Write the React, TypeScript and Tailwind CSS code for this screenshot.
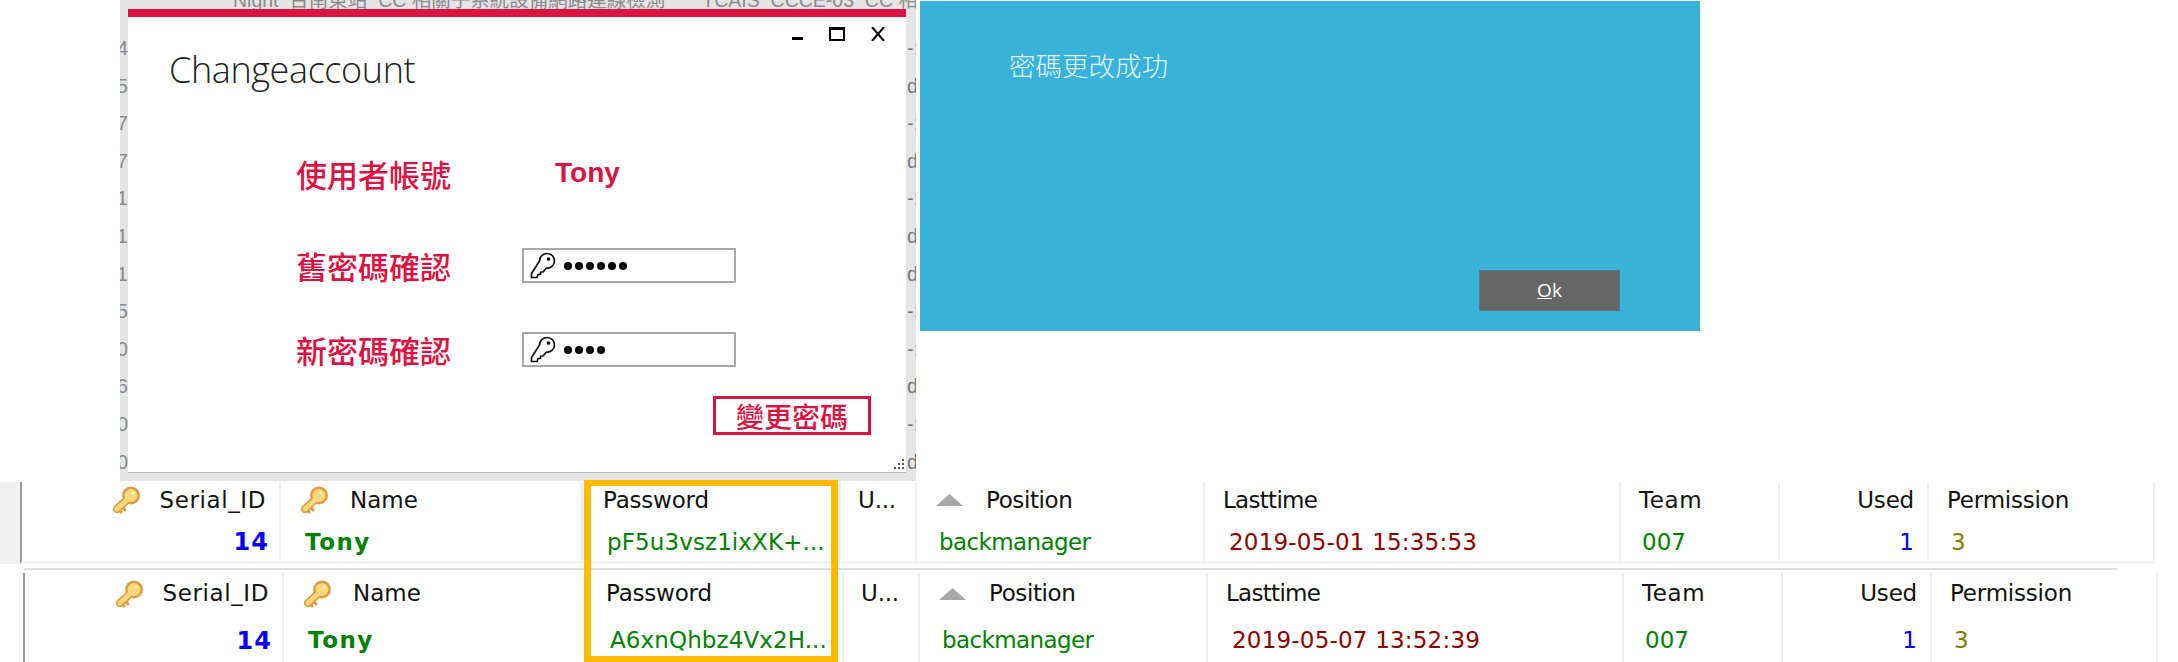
import React from "react";

const ghostRows = [
    { left: "4", right: "-:" },
    { left: "75", right: "di" },
    { left: "47", right: "-:" },
    { left: "47", right: "di" },
    { left: "21", right: "-:" },
    { left: "21", right: "di" },
    { left: "31", right: "di" },
    { left: "75", right: "-:" },
    { left: "00", right: "-:" },
    { left: "56", right: "di" },
    { left: "0", right: "-:" },
    { left: "0", right: "di" },
];

const GoldKey = () => (
    <svg width="29" height="28" viewBox="0 0 29 28" className="shrink-0">
        <path d="M17 12 L5 23" stroke="#dc9a45" strokeWidth="8" strokeLinecap="round" />
        <circle cx="19" cy="9.5" r="9" fill="#dc9a45" />
        <path d="M10 21 l3 3 M7 23 l2 3" stroke="#dc9a45" strokeWidth="3" strokeLinecap="round" />
        <path d="M17 12 L5 23" stroke="#f8d878" strokeWidth="5" strokeLinecap="round" />
        <circle cx="19" cy="9.5" r="6.5" fill="#f8d878" />
        <circle cx="21" cy="7" r="1.8" fill="#fdf0b8" />
    </svg>
);

const LineKey = () => (
    <svg width="26" height="27" viewBox="0 0 26 27" fill="none" stroke="#111" strokeWidth="1.7" strokeLinejoin="round" className="shrink-0">
        <path d="M9.5 9 C9.5 4.5 13 1.5 17 1.5 C21.5 1.5 24.5 5 24.5 9 C24.5 13.5 20.5 16.5 16.5 16 L13 20 L10.5 20 L10.5 22.5 L8 22.5 L7 25.5 L1.5 25.5 L1.5 21.5 Z" />
        <circle cx="18.5" cy="7" r="1" fill="#111" />
    </svg>
);

const PasswordField = ({ count }: { count: number }) => (
    <div className="flex h-[35px] w-[214px] items-center border-2 border-[#a8a8a8] pl-[6px]">
        <LineKey />
        <div className="ml-[8px] flex gap-[3px]">
            {Array.from({ length: count }).map((_, i) => (
                <span key={i} className="h-[8px] w-[8px] rounded-full bg-black" />
            ))}
        </div>
    </div>
);

const FormRow = ({ label, children, className }: { label: string; children: React.ReactNode; className: string }) => (
    <div className={`flex items-center pl-[168px] ${className}`}>
        <span className="w-[226px] whitespace-nowrap text-[31px] leading-none font-medium text-[#dc1242] [font-family:'Noto_Sans_CJK_TC',sans-serif]">
            {label}
        </span>
        {children}
    </div>
);

const ChangeAccountWindow = () => (
    <div className="flex h-[481px] w-[796px] shrink-0 flex-col overflow-hidden bg-[#e4e4e4]">
        <div className="h-[9px] overflow-hidden pl-[113px] text-[19.5px] whitespace-nowrap text-[#8a8a8a] [font-family:'Liberation_Sans','Noto_Sans_CJK_TC',sans-serif]">
            <div className="mt-[-14px] flex">
                <span>Night&nbsp; 台南東站_CC 相關子系統設備網路連線檢測</span>
                <span className="ml-[37px]">TCAIS_CCCE-03_CC 相關子系統設備</span>
            </div>
        </div>
        <div className="flex h-[463px]">
            <div className="flex w-[8px] flex-col items-end overflow-hidden pt-[21px] text-[20px] leading-[37.6px] text-[#8a8a8a] [font-family:'Liberation_Sans',sans-serif]">
                {ghostRows.map((row, i) => (
                    <span key={i} className="whitespace-nowrap">{row.left}</span>
                ))}
            </div>
            <div className="relative flex w-[778px] flex-col bg-white shadow-[0_1px_0_#bdbdbd]">
                <div className="h-[8px] bg-[#dc1242]" />
                <div className="mt-[10px] flex h-[14px] items-end justify-end gap-[26px] pr-[21px]">
                    <span className="mb-[1px] h-[3px] w-[11px] bg-black" />
                    <span className="h-[14px] w-[16px] border-2 border-t-[3px] border-black" />
                    <svg width="14" height="14" viewBox="0 0 14 14" stroke="#000" strokeWidth="2">
                        <path d="M1 0 L13 14 M13 0 L1 14" />
                    </svg>
                </div>
                <div className="mt-[7px] pl-[41px] text-[36px] leading-[44px] font-light tracking-[-0.4px] text-[#222] [font-family:'Open_Sans',sans-serif]">
                    Changeaccount
                </div>
                <FormRow label="使用者帳號" className="mt-[63px] h-[36px]">
                    <span className="ml-[33px] text-[28px] font-bold text-[#dc1242] [font-family:'Liberation_Sans',sans-serif]">Tony</span>
                </FormRow>
                <FormRow label="舊密碼確認" className="mt-[57px] h-[35px]">
                    <PasswordField count={6} />
                </FormRow>
                <FormRow label="新密碼確認" className="mt-[49px] h-[35px]">
                    <PasswordField count={4} />
                </FormRow>
                <div className="mt-[29px] flex justify-end pr-[35px]">
                    <button className="flex h-[39px] w-[158px] items-center justify-center border-[3px] border-[#dc1242] text-[28px] leading-none font-medium text-[#dc1242] [font-family:'Noto_Sans_CJK_TC',sans-serif]">
                        變更密碼
                    </button>
                </div>
                {/* resize grip */}
                <div className="absolute right-[2px] bottom-[3px] grid grid-cols-3 gap-[2px]">
                    <span /><span /><span className="h-[2px] w-[2px] bg-[#555]" />
                    <span /><span className="h-[2px] w-[2px] bg-[#555]" /><span className="h-[2px] w-[2px] bg-[#555]" />
                    <span className="h-[2px] w-[2px] bg-[#555]" /><span className="h-[2px] w-[2px] bg-[#555]" /><span className="h-[2px] w-[2px] bg-[#555]" />
                </div>
            </div>
            <div className="flex w-[10px] flex-col overflow-hidden pt-[21px] pl-[1px] text-[20px] leading-[37.6px] text-[#777] [font-family:'Liberation_Sans',sans-serif]">
                {ghostRows.map((row, i) => (
                    <span key={i} className="whitespace-nowrap">{row.right}</span>
                ))}
            </div>
        </div>
    </div>
);

const SuccessPanel = () => (
    <div className="mt-[1px] ml-[4px] flex h-[330px] w-[780px] flex-col bg-[#38b2d9]">
        <div className="mt-[50px] pl-[89px] text-[26.5px] leading-[28px] font-light text-[#e2f5fb] [font-family:'Noto_Sans_CJK_TC',sans-serif]">
            密碼更改成功
        </div>
        <div className="mt-auto mb-[20px] flex justify-end pr-[80px]">
            <button className="flex h-[41px] w-[141px] items-center justify-center border border-[#5f7480] bg-[#666666] text-[19px] text-white [font-family:'Open_Sans',sans-serif]">
                <span><u>O</u>k</span>
            </button>
        </div>
    </div>
);

const cellFont = "text-[23px] whitespace-nowrap [font-family:'DejaVu_Sans',sans-serif]";

const Column = ({
    width,
    headerHeight,
    header,
    value,
    last,
}: {
    width: string;
    headerHeight: string;
    header: React.ReactNode;
    value: React.ReactNode;
    last?: boolean;
}) => (
    <div className={`flex shrink-0 flex-col overflow-hidden ${width} ${last ? "" : "border-r-2 border-[#efefef]"}`}>
        <div className={`flex items-center text-[#111] ${headerHeight} ${cellFont} ${last ? "" : "-mr-[2px] border-r-2 border-[#dcdcdc]"}`}>{header}</div>
        <div className="flex flex-1 items-center pt-[5px]">{value}</div>
    </div>
);

const Header = ({ children, className }: { children: React.ReactNode; className: string }) => (
    <span className={`tracking-[-0.2px] ${className}`}>{children}</span>
);

const Value = ({ children, className }: { children: React.ReactNode; className: string }) => (
    <span className={`${cellFont} ${className}`}>{children}</span>
);

const UserTable = ({
    password,
    lasttime,
    headerHeight,
    className,
}: {
    password: string;
    lasttime: string;
    headerHeight: string;
    className: string;
}) => (
    <div className={`flex border-l-2 border-[#9a9a9a] ${className}`}>
        <Column
            width="w-[259px]"
            headerHeight={headerHeight}
            header={
                <span className="flex w-full items-center justify-end pr-[13px]">
                    <GoldKey />
                    <span className="ml-[19px] tracking-[0.6px]">Serial_ID</span>
                </span>
            }
            value={<span className="w-full pr-[10px] text-right text-[24px] font-bold tracking-[1px] text-[#0000ff] [font-family:'DejaVu_Sans',sans-serif]">14</span>}
        />
        <Column
            width="w-[302px]"
            headerHeight={headerHeight}
            header={
                <span className="flex items-center pl-[19px]">
                    <GoldKey />
                    <span className="ml-[21px]">Name</span>
                </span>
            }
            value={<span className="pl-[24px] text-[23px] font-bold tracking-[1.5px] text-[#008000] [font-family:'DejaVu_Sans',sans-serif]">Tony</span>}
        />
        <Column
            width="w-[258px]"
            headerHeight={headerHeight}
            header={<Header className="pl-[20px]">Password</Header>}
            value={<Value className="pl-[24px] tracking-[0.1px] text-[#008000]">{password}</Value>}
        />
        <Column width="w-[76px]" headerHeight={headerHeight} header={<Header className="pl-[17px]">U...</Header>} value={null} />
        <Column
            width="w-[288px]"
            headerHeight={headerHeight}
            header={
                <span className="flex items-center pl-[19px]">
                    <svg width="27" height="12" viewBox="0 0 27 12" className="shrink-0"><path d="M13.5 0 L27 12 L0 12 Z" fill="#a8a8a8" /></svg>
                    <span className="ml-[23px] tracking-[-0.4px]">Position</span>
                </span>
            }
            value={<Value className="pl-[22px] tracking-[-0.6px] text-[#008000]">backmanager</Value>}
        />
        <Column
            width="w-[416px]"
            headerHeight={headerHeight}
            header={<Header className="pl-[18px] !tracking-[-0.7px]">Lasttime</Header>}
            value={<Value className="pl-[24px] tracking-[0.2px] text-[#8b0000]">{lasttime}</Value>}
        />
        <Column
            width="w-[159px]"
            headerHeight={headerHeight}
            header={<Header className="pl-[18px] !tracking-[0.6px]">Team</Header>}
            value={<Value className="pl-[21px] text-[#008000]">007</Value>}
        />
        <Column
            width="w-[149px]"
            headerHeight={headerHeight}
            header={<Header className="w-full pr-[13px] text-right">Used</Header>}
            value={<Value className="w-full pr-[13px] text-right text-[#0000ff]">1</Value>}
        />
        <Column
            width="w-[226px]"
            headerHeight={headerHeight}
            header={<Header className="pl-[18px]">Permission</Header>}
            value={<Value className="pl-[22px] text-[#808000]">3</Value>}
        />
    </div>
);

export default function App() {
    return (
        <div className="relative flex h-[662px] w-[2178px] flex-col overflow-hidden bg-white">
            <div className="flex h-[483px] pl-[120px]">
                <ChangeAccountWindow />
                <SuccessPanel />
            </div>
            <div className="flex">
                <div className="h-[82px] w-[20px] bg-[#f0f0f0]" />
                <UserTable
                    password="pF5u3vsz1ixXK+..."
                    lasttime="2019-05-01 15:35:53"
                    headerHeight="h-[36px]"
                    className="h-[82px] border-b-[3px] border-b-[#f2f2f2]"
                />
            </div>
            <div className="mt-[4px] ml-[24px] h-[2px] w-[2093px] bg-[#dedede]" />
            <UserTable
                password="A6xnQhbz4Vx2H..."
                lasttime="2019-05-07 13:52:39"
                headerHeight="h-[41px]"
                className="mt-[3px] ml-[23px] h-[89px]"
            />
            {/* highlight box around the password column */}
            <div className="absolute top-[480px] left-[584px] h-[182px] w-[254px] border-x-[7px] border-y-[6px] border-[#ffb900]" />
        </div>
    );
}
